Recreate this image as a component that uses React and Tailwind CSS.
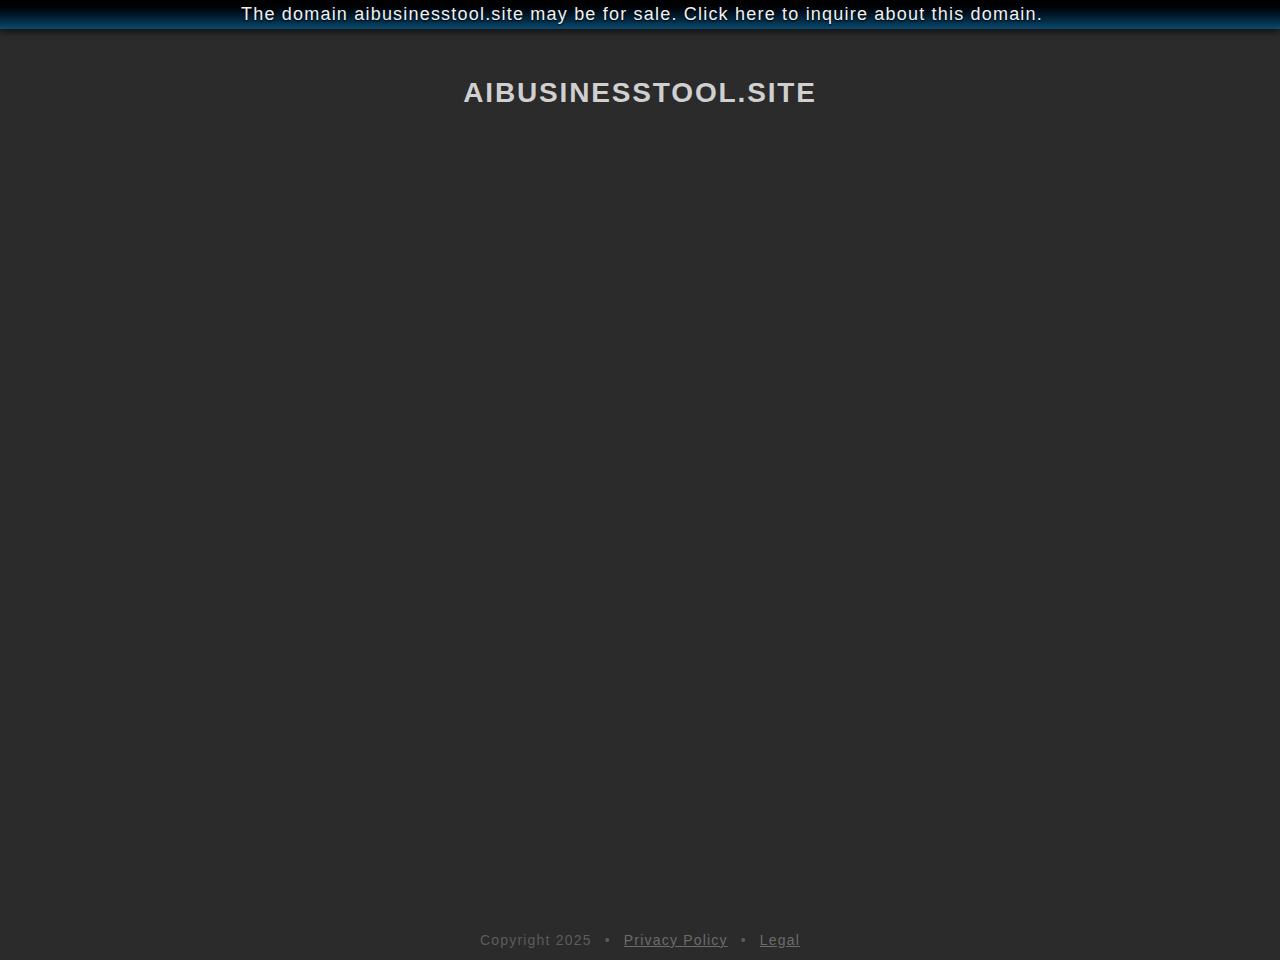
import React from 'react';

const App = () => {
  return (
    <div className="min-h-[960px] bg-[#2b2b2b] flex flex-col font-['Liberation_Sans',Arial,sans-serif]">
      <div className="h-[29px] bg-gradient-to-b from-[#000000] to-[#0a4a70] shadow-[0_3px_6px_rgba(0,0,0,0.6)] flex items-center justify-center pb-[2px] pl-[4px]">
        <a className="text-[18px] tracking-[1.2px] text-[#f0f0f0] [text-shadow:0_1px_2px_#000] leading-none cursor-pointer">
          The domain aibusinesstool.site may be for sale. Click here to inquire about this domain.
        </a>
      </div>
      <h1 className="mt-[50px] text-center text-[28px] font-bold tracking-[1.85px] text-[#d0d0d0] leading-none">
        AIBUSINESSTOOL.SITE
      </h1>
      <div className="flex-1" />
      <div className="pb-[9px] flex justify-center items-center text-[14px] tracking-[1.2px] text-[#5c5c5c]">
        <span>Copyright 2025</span>
        <span className="mx-[13px]">•</span>
        <a className="underline text-[#6c6c6c]">Privacy Policy</a>
        <span className="mx-[13px]">•</span>
        <a className="underline text-[#6c6c6c]">Legal</a>
      </div>
    </div>
  );
};

export default App;
